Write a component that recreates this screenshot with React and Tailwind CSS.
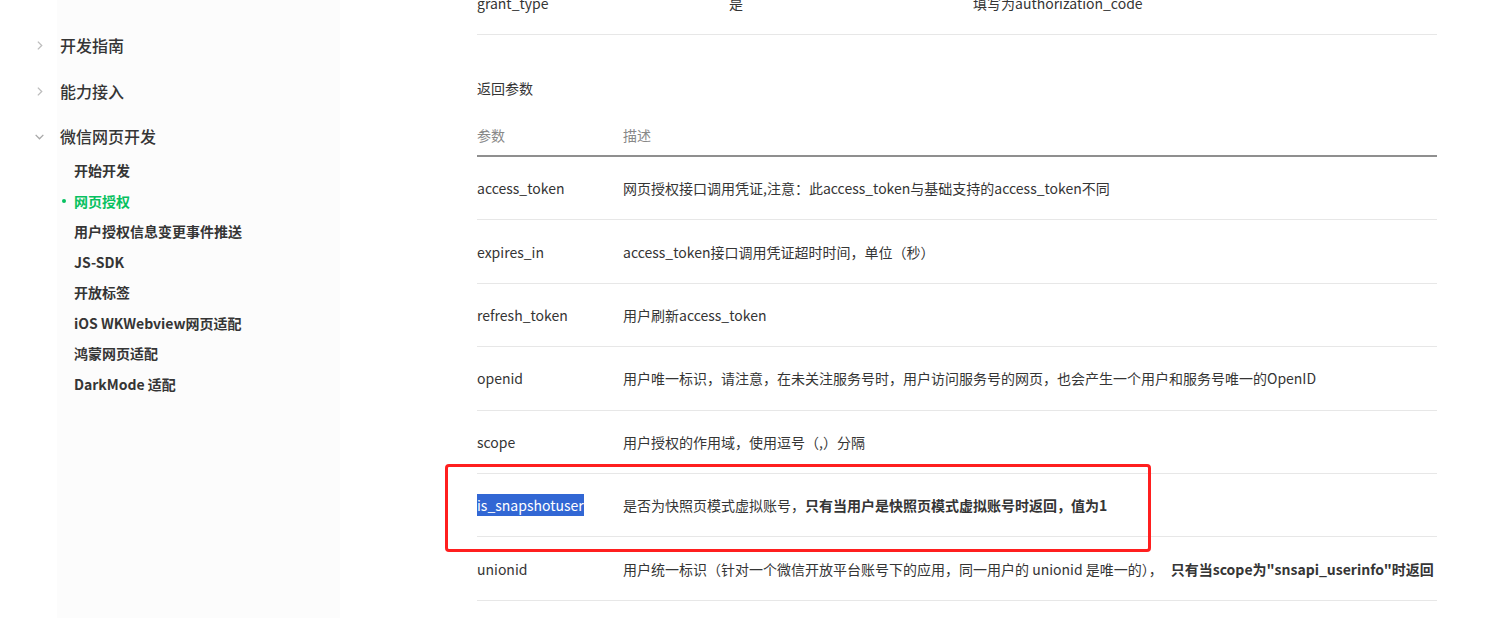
import React from 'react';

const font = { fontFamily: '"Microsoft YaHei", "Noto Sans CJK SC", "Noto Sans", sans-serif' };

const Chevron = ({ open }) => (
    <svg width="11" height="11" viewBox="0 0 10 10" className="shrink-0">
        {open ? (
            <path d="M1.5 3.5 L5 7 L8.5 3.5" fill="none" stroke="#a8a8a8" strokeWidth="1.2" />
        ) : (
            <path d="M3.5 1.5 L7 5 L3.5 8.5" fill="none" stroke="#bdbdbd" strokeWidth="1.2" />
        )}
    </svg>
);

const subItems = [
    { label: '开始开发' },
    { label: '网页授权', active: true },
    { label: '用户授权信息变更事件推送' },
    { label: 'JS-SDK' },
    { label: '开放标签' },
    { label: 'iOS WKWebview网页适配' },
    { label: '鸿蒙网页适配' },
    { label: 'DarkMode 适配' },
];

const rows = [
    { name: 'access_token', desc: <>网页授权接口调用凭证,注意：此access_token与基础支持的access_token不同</> },
    { name: 'expires_in', desc: <>access_token接口调用凭证超时时间，单位（秒）</> },
    { name: 'refresh_token', desc: <>用户刷新access_token</> },
    { name: 'openid', desc: <>用户唯一标识，请注意，在未关注服务号时，用户访问服务号的网页，也会产生一个用户和服务号唯一的OpenID</> },
    { name: 'scope', desc: <>用户授权的作用域，使用逗号（,）分隔</> },
    {
        name: 'is_snapshotuser',
        selected: true,
        desc: <>是否为快照页模式虚拟账号，<b className="font-bold">只有当用户是快照页模式虚拟账号时返回，值为1</b></>,
    },
    {
        name: 'unionid',
        desc: <>用户统一标识（针对一个微信开放平台账号下的应用，同一用户的 unionid 是唯一的），<b className="font-bold ml-[8px]">只有当scope为"snsapi_userinfo"时返回</b></>,
    },
];

const Sidebar = () => (
    <aside className="w-[340px] shrink-0 h-[618px] flex">
        <div className="w-[57px] bg-white"></div>
        <div className="flex-1 bg-[#fcfcfc] pt-[34px]">
            <div className="flex items-center h-[22px] -ml-[23px] gap-[15px]">
                <Chevron />
                <span className="text-[16px] leading-[22px] font-medium text-[#353535]">开发指南</span>
            </div>
            <div className="flex items-center h-[22px] -ml-[23px] gap-[15px] mt-[24px]">
                <Chevron />
                <span className="text-[16px] leading-[22px] font-medium text-[#353535]">能力接入</span>
            </div>
            <div className="flex items-center h-[22px] -ml-[23px] gap-[15px] mt-[23px]">
                <Chevron open />
                <span className="text-[16px] leading-[22px] font-medium text-[#353535]">微信网页开发</span>
            </div>
            <ul className="mt-[8px]">
                {subItems.map((it) => (
                    <li key={it.label} className="relative h-[30.5px] flex items-center pl-[17px]">
                        {it.active && (
                            <span className="absolute left-[5px] top-[13px] w-[4px] h-[4px] rounded-full bg-[#07c160]"></span>
                        )}
                        <span
                            className={`text-[14px] leading-[20px] font-semibold ${it.active ? 'text-[#07c160]' : 'text-[#353535]'}`}
                        >
                            {it.label}
                        </span>
                    </li>
                ))}
            </ul>
        </div>
    </aside>
);

const App = () => {
    return (
        <div className="relative w-[1508px] h-[618px] overflow-hidden bg-white flex text-[#353535]" style={font}>
            <Sidebar />
            <main className="pl-[137px] w-[1097px]">
                <div className="w-[960px]">
                    <div className="-mt-[28px] h-[63px] border-b border-[#e7e7e7] flex items-center text-[14px] leading-[20px]">
                        <span className="w-[252px]">grant_type</span>
                        <span className="w-[244px]">是</span>
                        <span>填写为authorization_code</span>
                    </div>
                    <p className="mt-[42px] text-[14px] leading-[22px]">返回参数</p>
                    <div className="mt-[15px] h-[43px] flex items-center border-b-2 border-[#8f8f8f] text-[14px] leading-[20px] text-[#888888]">
                        <span className="w-[146px]">参数</span>
                        <span>描述</span>
                    </div>
                    {rows.map((r) => (
                        <div
                            key={r.name}
                            className="h-[63.4px] box-border flex items-center border-b border-[#e7e7e7] text-[14px] leading-[20px] whitespace-nowrap"
                        >
                            <span className="w-[146px] shrink-0">
                                {r.selected ? (
                                    <span className="bg-[#3267d4] text-white leading-[22px] inline-block">{r.name}</span>
                                ) : (
                                    r.name
                                )}
                            </span>
                            <span>{r.desc}</span>
                        </div>
                    ))}
                </div>
            </main>
            {/* annotation box */}
            <div className="absolute left-[445px] top-[464px] w-[706px] h-[88px] border-[3px] border-[#ff1f1f] rounded-[4px] pointer-events-none"></div>
        </div>
    );
};

export default App;
